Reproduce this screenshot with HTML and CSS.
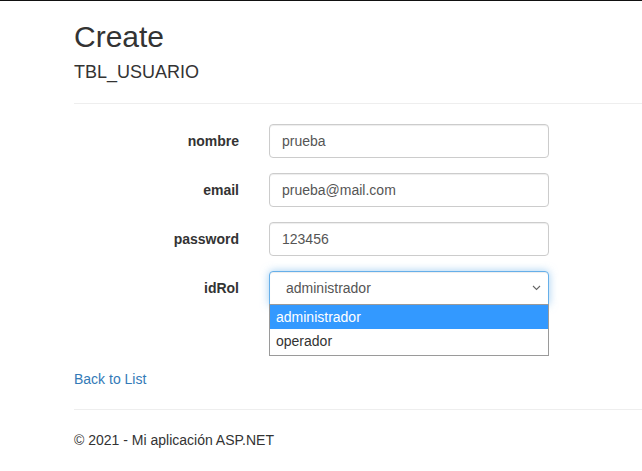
FILE: index.html
```html
<!DOCTYPE html>
<html lang="es">
<head>
<meta charset="utf-8">
<title>Create</title>
<link rel="stylesheet" href="styles.css">
</head>
<body>
<div class="topbar"></div>
<div class="container">
  <h2 class="title">Create</h2>
  <h4 class="subtitle">TBL_USUARIO</h4>
  <hr class="rule">
  <form class="form">
    <div class="form-group">
      <label class="control-label">nombre</label>
      <div class="field"><div class="input">prueba</div></div>
    </div>
    <div class="form-group">
      <label class="control-label">email</label>
      <div class="field"><div class="input">prueba@mail.com</div></div>
    </div>
    <div class="form-group">
      <label class="control-label">password</label>
      <div class="field"><div class="input">123456</div></div>
    </div>
    <div class="form-group">
      <label class="control-label">idRol</label>
      <div class="field select-wrap">
        <div class="input select">
          <span class="select-text">administrador</span>
          <svg class="chevron" width="9" height="6" viewBox="0 0 9 6"><path d="M1 1 L4.5 4.5 L8 1" fill="none" stroke="#666" stroke-width="1.1"/></svg>
        </div>
        <ul class="dropdown">
          <li class="option active">administrador</li>
          <li class="option">operador</li>
        </ul>
      </div>
    </div>
    <div class="form-group">
      <div class="label-spacer"></div>
      <div class="field"><button type="button" class="btn">Create</button></div>
    </div>
  </form>
  <div class="back"><a href="#" class="link">Back to List</a></div>
  <hr class="rule footer-rule">
  <footer class="footer"><p class="copy">© 2021 - Mi aplicación ASP.NET</p></footer>
</div>
</body>
</html>
```

FILE: styles.css
```css
html, body {
  margin: 0;
  padding: 0;
}
body {
  font-family: "Liberation Sans", Arial, sans-serif;
  font-size: 14px;
  line-height: 20px;
  color: #333;
  background: #fff;
  overflow: hidden;
}
.topbar {
  height: 1px;
  background: #111;
}
.container {
  padding-left: 74px;
}
.title {
  font-size: 30px;
  line-height: 33px;
  font-weight: 500;
  margin: 19px 0 10px;
  color: #333;
}
.subtitle {
  font-size: 18px;
  line-height: 19.8px;
  font-weight: 500;
  margin: 10px 0 10px;
  color: #333;
}
.rule {
  border: 0;
  border-top: 1px solid #eee;
  margin: 20px 0;
  height: 0;
}
.form {
  margin: 0;
}
.form-group {
  display: flex;
  gap: 30px;
  margin-bottom: 15px;
}
.control-label,
.label-spacer {
  width: 165px;
  flex: none;
  text-align: right;
  font-weight: bold;
  padding-top: 7px;
  line-height: 20px;
}
.field {
  width: 280px;
  position: relative;
}
.input {
  box-sizing: border-box;
  height: 34px;
  width: 280px;
  padding: 6px 12px;
  line-height: 20px;
  font-size: 14px;
  color: #555;
  background: #fff;
  border: 1px solid #ccc;
  border-radius: 4px;
  box-shadow: inset 0 1px 1px rgba(0,0,0,.075);
}
.select {
  display: flex;
  align-items: center;
  justify-content: space-between;
  padding-left: 16px;
  padding-right: 7px;
  border-color: #66afe9;
  border-radius: 4px 4px 0 0;
  box-shadow: inset 0 1px 1px rgba(0,0,0,.075), 0 0 8px rgba(102,175,233,.6);
}
.select-text {
  color: #555;
}
.chevron {
  display: block;
}
.dropdown {
  position: absolute;
  left: 0;
  top: 33px;
  width: 280px;
  box-sizing: border-box;
  margin: 0;
  padding: 0;
  list-style: none;
  background: #fff;
  border: 1px solid #9a9a9a;
  z-index: 5;
}
.option {
  height: 24px;
  line-height: 24px;
  padding-left: 6px;
  color: #333;
  font-size: 14px;
}
.option + .option {
  height: 26px;
  line-height: 25px;
}
.option.active {
  background: #3399ff;
  color: #fff;
}
.btn {
  visibility: hidden;
  font-family: inherit;
  font-size: 14px;
  line-height: 20px;
  height: 34px;
  padding: 6px 12px;
  border: 1px solid #ccc;
  border-radius: 4px;
  background: #fff;
  color: #333;
}
.back {
  margin: 0;
}
.link {
  color: #337ab7;
  text-decoration: none;
}
.footer-rule {
  margin: 20px 0;
}
.copy {
  margin: 0 0 10px;
}
```
